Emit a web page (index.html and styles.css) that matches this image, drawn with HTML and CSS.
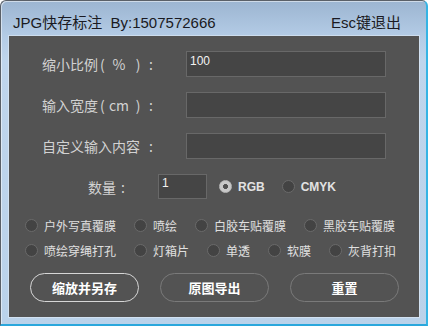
FILE: index.html
```html
<!DOCTYPE html>
<html>
<head>
<meta charset="utf-8">
<link rel="stylesheet" href="styles.css">
</head>
<body>
<div class="window">
  <div class="titlebar">
    <span class="title">JPG快存标注&nbsp;&nbsp;By:1507572666</span>
    <span class="esc">Esc键退出</span>
  </div>
  <div class="panel">
    <div class="field">
      <span class="label"><span>缩小比例</span><span class="lp">(</span><span class="unit">%</span><span class="rp">)</span><span class="colon">:</span></span>
      <div class="input">100</div>
    </div>
    <div class="field">
      <span class="label"><span>输入宽度</span><span class="lp">(</span><span class="unit">cm</span><span class="rp">)</span><span class="colon">:</span></span>
      <div class="input"></div>
    </div>
    <div class="field">
      <span class="label"><span>自定义输入内容</span><span class="colon">:</span></span>
      <div class="input"></div>
    </div>
    <div class="qty-row">
      <span class="qty-label"><span>数量</span><span class="colon">:</span></span>
      <div class="qty-input">1</div>
      <div class="mode">
        <span class="radio checked"></span><span class="mode-text">RGB</span>
      </div>
      <div class="mode">
        <span class="radio"></span><span class="mode-text">CMYK</span>
      </div>
    </div>
    <div class="opt-row">
      <div class="opt"><span class="radio"></span><span>户外写真覆膜</span></div>
      <div class="opt"><span class="radio"></span><span>喷绘</span></div>
      <div class="opt"><span class="radio"></span><span>白胶车贴覆膜</span></div>
      <div class="opt"><span class="radio"></span><span>黑胶车贴覆膜</span></div>
    </div>
    <div class="opt-row second">
      <div class="opt"><span class="radio"></span><span>喷绘穿绳打孔</span></div>
      <div class="opt"><span class="radio"></span><span>灯箱片</span></div>
      <div class="opt"><span class="radio"></span><span>单透</span></div>
      <div class="opt"><span class="radio"></span><span>软膜</span></div>
      <div class="opt"><span class="radio"></span><span>灰背打扣</span></div>
    </div>
    <div class="buttons">
      <div class="btn primary">缩放并另存</div>
      <div class="btn">原图导出</div>
      <div class="btn">重置</div>
    </div>
  </div>
</div>
</body>
</html>
```

FILE: styles.css
```css
html, body {
  margin: 0;
  padding: 0;
  width: 428px;
  height: 326px;
  overflow: hidden;
  background: #ffffff;
}

.window {
  box-sizing: border-box;
  width: 428px;
  height: 326px;
  display: flex;
  flex-direction: column;
  border-radius: 6px 6px 0 0;
  border-top: 1px solid #5a6068;
  border-left: 1px solid #5a6068;
  border-right: 2px solid #35b4e4;
  border-bottom: 2px solid #2aa7dc;
  background: linear-gradient(to bottom, #9cb5d1 0px, #b4cce6 36px, #bfd5ec 60px, #bad2ea 326px);
  box-shadow: inset 1px 1px 0 rgba(255,255,255,0.5);
}

.titlebar {
  box-sizing: border-box;
  height: 35px;
  display: flex;
  align-items: center;
  justify-content: space-between;
  padding: 6px 25px 0 12px;
  font-family: "Liberation Sans", "Noto Sans CJK SC", sans-serif;
  font-size: 15px;
  color: #1a1a22;
}

.panel {
  margin: 0 7px 0 8px;
  height: 281px;
  background: #535353;
  display: flex;
  flex-direction: column;
  padding-top: 15px;
  box-sizing: border-box;
  font-family: "Noto Sans CJK SC", sans-serif;
  outline: 1px solid rgba(255,255,255,0.35);
}

.field {
  display: flex;
  align-items: center;
  height: 26px;
  margin-bottom: 15px;
  padding-left: 33px;
}

.label {
  display: flex;
  align-items: center;
  width: 116px;
  margin-right: 28px;
  font-size: 14px;
  color: #d2d2d2;
  white-space: nowrap;
}

.lp {
  width: 8px;
  padding-left: 2px;
  box-sizing: border-box;
}

.unit {
  width: 26px;
  text-align: center;
}

.rp {
  width: 12px;
  text-align: center;
}

.colon {
  width: 14px;
  text-align: center;
  margin-left: auto;
}

.input {
  box-sizing: border-box;
  width: 200px;
  height: 26px;
  background: #454545;
  border: 1px solid #686868;
  color: #f2f2f2;
  font-family: "Liberation Sans", sans-serif;
  font-size: 12px;
  padding: 2px 0 0 3px;
  line-height: 14px;
}

.qty-row {
  display: flex;
  align-items: center;
  height: 25px;
  padding-left: 79px;
}

.qty-label {
  display: flex;
  align-items: center;
  font-size: 14px;
  color: #d2d2d2;
  width: 70px;
}

.qty-label .colon {
  margin-left: 0;
}

.qty-input {
  box-sizing: border-box;
  width: 49px;
  height: 25px;
  background: #454545;
  border: 1px solid #686868;
  color: #f2f2f2;
  font-family: "Liberation Sans", sans-serif;
  font-size: 12px;
  padding: 1px 0 0 3px;
  line-height: 14px;
  margin-right: 12px;
}

.mode {
  display: flex;
  align-items: center;
  gap: 6px;
  margin-right: 17px;
}

.mode-text {
  font-family: "Liberation Sans", sans-serif;
  font-weight: bold;
  font-size: 12px;
  color: #e2e2e2;
}

.radio {
  box-sizing: border-box;
  display: inline-block;
  width: 13px;
  height: 13px;
  border-radius: 50%;
  background: #434343;
  border: 1px solid #6a6a6a;
  flex: none;
}

.radio.checked {
  background: radial-gradient(circle, #505050 0 2.2px, #c8c8c8 2.8px);
  border-color: #b8b8b8;
}

.opt-row {
  display: flex;
  align-items: center;
  gap: 18px;
  height: 20px;
  margin-top: 16px;
  padding-left: 16px;
  font-size: 12px;
  color: #e0e0e0;
}

.opt-row.second {
  margin-top: 5px;
}

.opt {
  display: flex;
  align-items: center;
  gap: 6px;
  white-space: nowrap;
}

.buttons {
  display: flex;
  gap: 21px;
  margin-top: 13px;
  padding-left: 21px;
}

.btn {
  box-sizing: border-box;
  width: 109px;
  height: 29px;
  border-radius: 15px;
  border: 1px solid #7a7a7a;
  display: flex;
  align-items: center;
  justify-content: center;
  color: #ffffff;
  font-weight: bold;
  font-size: 13px;
}

.btn.primary {
  border: 1.5px solid #d6d6d6;
}
```
